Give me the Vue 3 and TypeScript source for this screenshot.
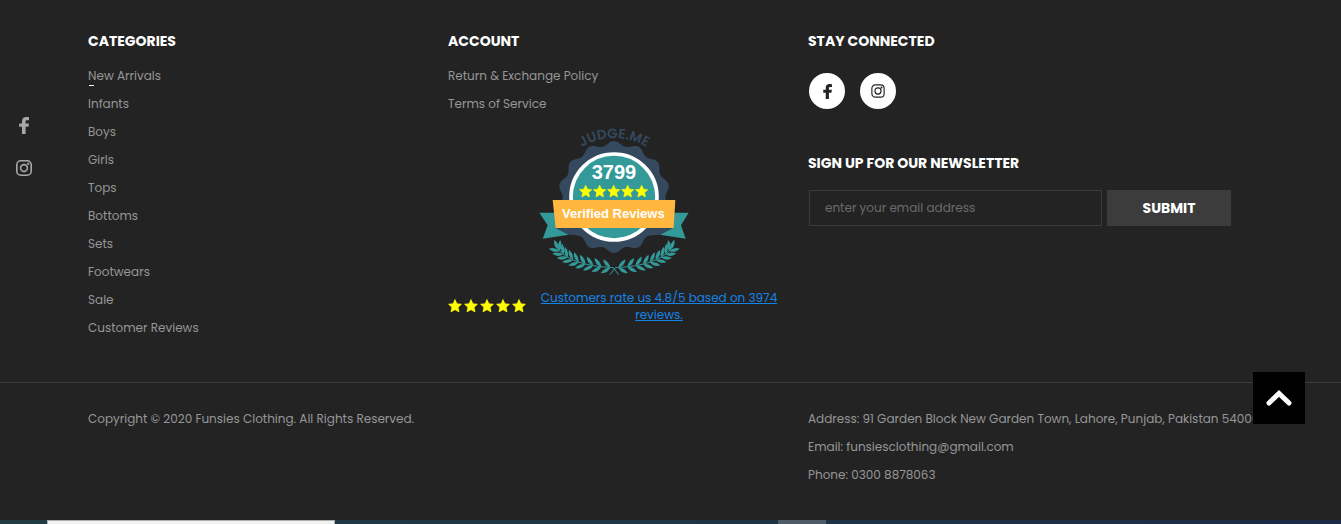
<script setup lang="ts">
interface Leaf {
  x: number
  y: number
  angle: number
}

const categories: string[] = [
  'New Arrivals',
  'Infants',
  'Boys',
  'Girls',
  'Tops',
  'Bottoms',
  'Sets',
  'Footwears',
  'Sale',
  'Customer Reviews',
]
const account: string[] = ['Return & Exchange Policy', 'Terms of Service']

const facebookPath =
  'M6.600 17V9.800h2.800l.6-3.200H6.600V4.700c0-1 .4-1.400 1.600-1.400H10V.2C9.200.1 8.300 0 7.300 0 4.700 0 3 1.500 3 4.200v2.400H.2v3.200H3V17z'
const starPath =
  'M10 .8l2.700 5.900 6.500.8-4.800 4.400 1.300 6.500L10 15.200l-5.700 3.200 1.300-6.500L.8 7.500l6.500-.8z'

// Scalloped seal outline: fourteen soft bumps around the centre.
const sealPath = (() => {
  const points: string[] = []
  for (let i = 0; i < 280; i++) {
    const a = (i / 280) * Math.PI * 2
    const r = 161 + 7 * Math.cos(14 * a)
    points.push(`${(252 + r * Math.sin(a)).toFixed(1)} ${(246 - r * Math.cos(a)).toFixed(1)}`)
  }
  return `M${points.join('L')}Z`
})()

// Leaves grow in pairs along the curved laurel stem, with a single one at the tip.
const leaves: Leaf[] = [{ x: 86, y: 405, angle: 247 }]
const stem = [
  [84, 402],
  [122, 452],
  [250, 458],
]
for (let i = 0; i < 9; i++) {
  const t = 0.06 + i * 0.113
  const u = 1 - t
  const x = u * u * stem[0][0] + 2 * u * t * stem[1][0] + t * t * stem[2][0]
  const y = u * u * stem[0][1] + 2 * u * t * stem[1][1] + t * t * stem[2][1]
  const dx = u * (stem[1][0] - stem[0][0]) + t * (stem[2][0] - stem[1][0])
  const dy = u * (stem[1][1] - stem[0][1]) + t * (stem[2][1] - stem[1][1])
  const heading = (Math.atan2(dy, dx) * 180) / Math.PI + 180
  leaves.push({ x, y, angle: heading + 46 }, { x, y, angle: heading - 34 })
}
</script>

<template>
  <div class="page">
    <footer class="footer">
      <div class="columns">
        <section>
          <h2>Categories</h2>
          <ul class="links">
            <li v-for="(item, i) in categories" :key="item">
              <a href="#" :class="{ active: i === 0 }">{{ item }}</a>
            </li>
          </ul>
        </section>

        <section>
          <h2>Account</h2>
          <ul class="links">
            <li v-for="item in account" :key="item">
              <a href="#">{{ item }}</a>
            </li>
          </ul>
          <div class="reviews">
            <svg class="badge" viewBox="27 30 450 450" role="img" aria-label="Judge.me verified reviews">
              <defs>
                <path id="arc" d="M117 128A185 185 0 0 1 388 128" />
                <g id="laurel">
                  <path d="M84 402Q122 452 250 458L266 479" fill="none" stroke="#339999" stroke-width="3" />
                  <path
                    v-for="(leaf, i) in leaves"
                    :key="i"
                    d="M0 0Q16 -12 33 0Q16 9 0 0Z"
                    fill="#339999"
                    :transform="`translate(${leaf.x} ${leaf.y}) rotate(${leaf.angle})`"
                  />
                </g>
              </defs>
              <text class="brand"><textPath href="#arc" startOffset="50%">JUDGE.ME</textPath></text>
              <path :d="sealPath" fill="#34495e" />
              <path d="M28 293H80V340L116 359L38 371L53 331ZM476 293H424V340L390 359L467 371L453 331Z" fill="#339999" />
              <path d="M76 338H160V362L116 359ZM431 338H346V362L390 359Z" fill="#34495e" />
              <circle cx="252" cy="246" r="129" fill="#339999" stroke="#fff" stroke-width="11" />
              <path d="M68 255H436L431 339H77Z" fill="#ffb740" />
              <text class="count" x="252" y="191">3799</text>
              <path
                v-for="n in 5"
                :key="n"
                :d="starPath"
                fill="#ff0"
                stroke="#ff0"
                :transform="`translate(${105 + n * 42} 209) scale(2)`"
              />
              <text class="verified" x="250" y="309">Verified Reviews</text>
              <use href="#laurel" />
              <use href="#laurel" transform="translate(506 0) scale(-1 1)" />
            </svg>
            <div class="rating">
              <div class="stars" role="img" aria-label="4.8 out of 5 stars">
                <svg v-for="n in 5" :key="n" viewBox="0 0 20 20"><path :d="starPath" /></svg>
              </div>
              <a href="#">Customers rate us 4.8/5 based on 3974 reviews.</a>
            </div>
          </div>
        </section>

        <section>
          <h2>Stay Connected</h2>
          <div class="social">
            <a href="#" aria-label="Facebook">
              <svg width="9" height="15" viewBox="0 0 10 17"><path :d="facebookPath" fill="currentColor" /></svg>
            </a>
            <a href="#" aria-label="Instagram">
              <svg width="14" height="14" viewBox="0 0 16 16" fill="none" stroke="currentColor" stroke-width="1.300">
                <rect x="1" y="1" width="14" height="14" rx="4" />
                <circle cx="8" cy="8" r="3.500" />
                <circle cx="12" cy="4" r="0.500" />
              </svg>
            </a>
          </div>
          <h2><label for="email">Sign up for our newsletter</label></h2>
          <form class="newsletter" @submit.prevent>
            <input id="email" type="email" placeholder="enter your email address" />
            <button type="submit">Submit</button>
          </form>
        </section>
      </div>

      <div class="bottom">
        <div class="bottom-inner">
          <p>Copyright © 2020 Funsies Clothing. All Rights Reserved.</p>
          <address>
            <p>Address: 91 Garden Block New Garden Town, Lahore, Punjab, Pakistan 54000</p>
            <p>Email: funsiesclothing@gmail.com</p>
            <p>Phone: 0300 8878063</p>
          </address>
        </div>
      </div>
    </footer>

    <nav class="side-social" aria-label="Social">
      <a href="#" aria-label="Facebook">
        <svg width="10" height="17" viewBox="0 0 10 17"><path :d="facebookPath" fill="currentColor" /></svg>
      </a>
      <a href="#" aria-label="Instagram">
        <svg width="16" height="16" viewBox="0 0 16 16" fill="none" stroke="currentColor" stroke-width="1.600">
          <rect x="0.800" y="0.800" width="14.400" height="14.400" rx="4" />
          <circle cx="8" cy="8" r="3.400" />
          <circle cx="12.200" cy="3.800" r="0.400" />
        </svg>
      </a>
    </nav>

    <button class="to-top" type="button" aria-label="Back to top">
      <svg width="26" height="16" viewBox="0 0 26 16">
        <path d="M3 13L13 3.500L23 13" fill="none" stroke="#fff" stroke-width="5" stroke-linecap="round" />
      </svg>
    </button>

    <div class="taskbar"><span class="search"></span><span class="task"></span></div>
  </div>
</template>

<style>
body {
  background: #232323;
}
</style>

<style scoped>
.page {
  position: relative;
  display: flex;
  flex-direction: column;
  min-height: 100vh;
  overflow: hidden;
  background: #232323;
  color: #969696;
  font: 12px/28px Poppins, Inter, 'Open Sans', sans-serif;
}
.footer {
  flex: 1;
}
h2,
p,
ul {
  margin: 0;
  padding: 0;
}
a {
  color: inherit;
  text-decoration: none;
}
h2 {
  color: #fff;
  font-size: 14px;
  line-height: 20px;
  font-weight: 700;
  text-transform: uppercase;
}
.columns,
.bottom-inner {
  display: grid;
  grid-template-columns: minmax(0, 72fr) minmax(0, 72fr) minmax(0, 89fr);
  padding: 0 88px;
}
.columns {
  padding-top: 31px;
  padding-bottom: 40px;
}
.links {
  list-style: none;
  padding-top: 11px;
}
.active {
  position: relative;
}
.active::after {
  content: '';
  position: absolute;
  left: 1px;
  bottom: -2px;
  width: 5px;
  height: 1px;
  background: #fff;
}
.reviews {
  padding: 7px 28px 0 0;
}
.badge {
  display: block;
  width: 150px;
  height: 150px;
  margin-left: 91px;
  overflow: visible;
}
.badge text {
  text-anchor: middle;
}
.brand {
  font: 600 41px Poppins, Inter, sans-serif;
  fill: #34495e;
}
.count {
  font: 700 60px 'Liberation Sans', Arial, sans-serif;
  fill: #fff;
}
.verified {
  font: 700 39px 'Liberation Sans', Arial, sans-serif;
  fill: #fff;
}
.rating {
  display: flex;
  align-items: center;
  gap: 12px;
  padding-top: 14px;
}
.stars {
  display: flex;
  gap: 2px;
}
.stars svg {
  width: 14px;
  height: 14px;
  fill: #ff0;
  stroke: #ff0;
  overflow: visible;
}
.rating a {
  flex: 1;
  color: #1583e6;
  line-height: 17px;
  text-align: center;
  text-decoration: underline;
}
.social {
  display: flex;
  gap: 15px;
  padding: 22px 0 44px 1px;
}
.social a {
  display: grid;
  place-items: center;
  width: 36px;
  height: 36px;
  border-radius: 50%;
  background: #fff;
  color: #232323;
}
.newsletter {
  display: flex;
  gap: 5px;
  padding: 17px 22px 0 1px;
}
.newsletter input {
  flex: 1;
  min-width: 0;
  height: 36px;
  box-sizing: border-box;
  padding: 0 15px;
  border: 1px solid #3c3c3c;
  background: transparent;
  color: #969696;
  font: inherit;
}
.newsletter input::placeholder {
  color: #6b6b6b;
}
.newsletter button {
  width: 124px;
  border: 0;
  background: #3c3c3c;
  color: #fff;
  font: inherit;
  font-size: 14px;
  font-weight: 700;
  text-transform: uppercase;
}
.bottom {
  border-top: 1px solid #3c3c3c;
  padding: 22px 0 31px;
}
address {
  grid-column: 3;
  font-style: normal;
  white-space: nowrap;
}
.side-social {
  position: absolute;
  left: 16px;
  top: 117px;
  display: grid;
  justify-items: center;
  gap: 26px;
  width: 16px;
  color: #a8a8a8;
}
.side-social svg {
  display: block;
}
.to-top {
  position: absolute;
  right: 36px;
  top: 372px;
  display: grid;
  place-items: center;
  width: 52px;
  height: 52px;
  padding: 0;
  border: 0;
  background: #000;
}
.taskbar {
  display: flex;
  height: 4px;
  background: linear-gradient(90deg, #213b43, #1e3545 50%, #1c2a45);
}
.search {
  width: 288px;
  margin: 0 443px 0 47px;
  box-sizing: border-box;
  border: 1px solid #b0b0b0;
  border-bottom: 0;
  background: #f2f2f2;
}
.task {
  width: 48px;
  background: #4f5b66;
}
</style>
